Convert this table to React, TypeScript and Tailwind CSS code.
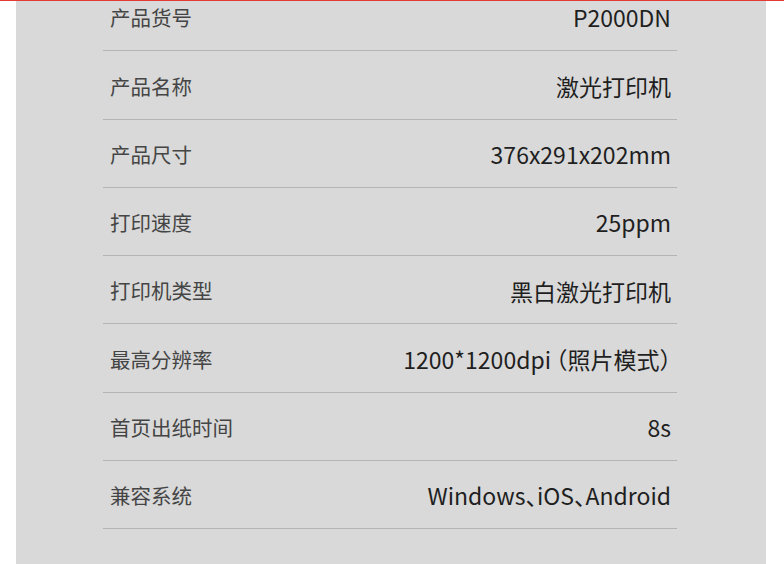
import type { ReactNode } from 'react'

const halt = '[font-feature-settings:"halt"]'

const specs: { label: string; value: ReactNode }[] = [
  { label: '产品货号', value: 'P2000DN' },
  { label: '产品名称', value: '激光打印机' },
  { label: '产品尺寸', value: '376x291x202mm' },
  { label: '打印速度', value: '25ppm' },
  { label: '打印机类型', value: '黑白激光打印机' },
  {
    label: '最高分辨率',
    value: (
      <>
        1200*1200dpi<span className={`ml-[5px] ${halt}`}>（</span>照片模式
        <span className={halt}>）</span>
      </>
    ),
  },
  { label: '首页出纸时间', value: '8s' },
  {
    label: '兼容系统',
    value: (
      <>
        Windows<span className={halt}>、</span>iOS<span className={halt}>、</span>Android
      </>
    ),
  },
]

export default function App() {
  return (
    <div
      className="relative flex h-[564px] flex-col overflow-hidden bg-white"
      style={{ fontFamily: '"Noto Sans CJK SC", "Noto Sans", sans-serif' }}
    >
      <div className="absolute inset-x-0 top-0 z-10 h-px bg-[#e53935]" />
      <div className="ml-[16px] flex w-[750px] flex-1 flex-col bg-[#d9d9d9] pl-[87px]">
        <ul className="-mt-[17px] w-[574px]">
          {specs.map((s) => (
            <li
              key={s.label}
              className="flex h-[68.3px] items-center justify-between border-b border-[#b4b4b4] pl-[7px] pr-[6px] pt-[2px]"
            >
              <span className="text-[20.5px] text-[#454545]">{s.label}</span>
              <span className="text-[23px] text-[#1f1f1f]">{s.value}</span>
            </li>
          ))}
        </ul>
      </div>
    </div>
  )
}
